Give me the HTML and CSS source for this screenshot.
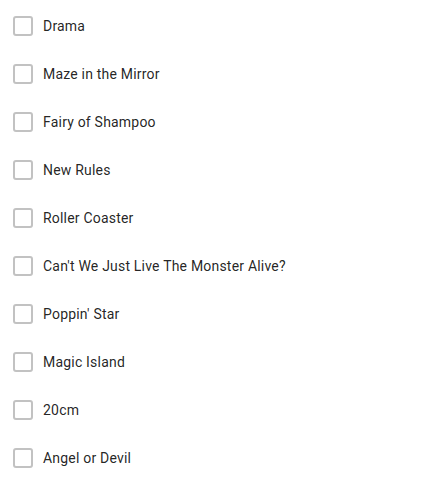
FILE: index.html
```html
<!DOCTYPE html>
<html>
<head>
<meta charset="utf-8">
<link rel="stylesheet" href="styles.css">
</head>
<body>
<ul class="list">
  <li class="item"><span class="box"></span><span class="label">Drama</span></li>
  <li class="item"><span class="box"></span><span class="label">Maze in the Mirror</span></li>
  <li class="item"><span class="box"></span><span class="label">Fairy of Shampoo</span></li>
  <li class="item"><span class="box"></span><span class="label">New Rules</span></li>
  <li class="item"><span class="box"></span><span class="label">Roller Coaster</span></li>
  <li class="item"><span class="box"></span><span class="label">Can't We Just Live The Monster Alive?</span></li>
  <li class="item"><span class="box"></span><span class="label">Poppin' Star</span></li>
  <li class="item"><span class="box"></span><span class="label">Magic Island</span></li>
  <li class="item"><span class="box"></span><span class="label">20cm</span></li>
  <li class="item"><span class="box"></span><span class="label">Angel or Devil</span></li>
</ul>
</body>
</html>
```
FILE: styles.css
```css
html, body {
  margin: 0;
  padding: 0;
  background: #fff;
}
body {
  font-family: Roboto, "Liberation Sans", sans-serif;
  font-size: 14px;
  letter-spacing: 0.2px;
  color: rgba(0, 0, 0, 0.87);
}
.list {
  list-style: none;
  margin: 0;
  padding: 2px 0 0 13px;
}
.item {
  display: flex;
  align-items: center;
  gap: 10px;
  height: 48px;
}
.box {
  box-sizing: border-box;
  width: 20px;
  height: 20px;
  border: 2px solid #c2c2c2;
  border-radius: 3px;
  flex: none;
}
.label {
  line-height: 20px;
}
```
